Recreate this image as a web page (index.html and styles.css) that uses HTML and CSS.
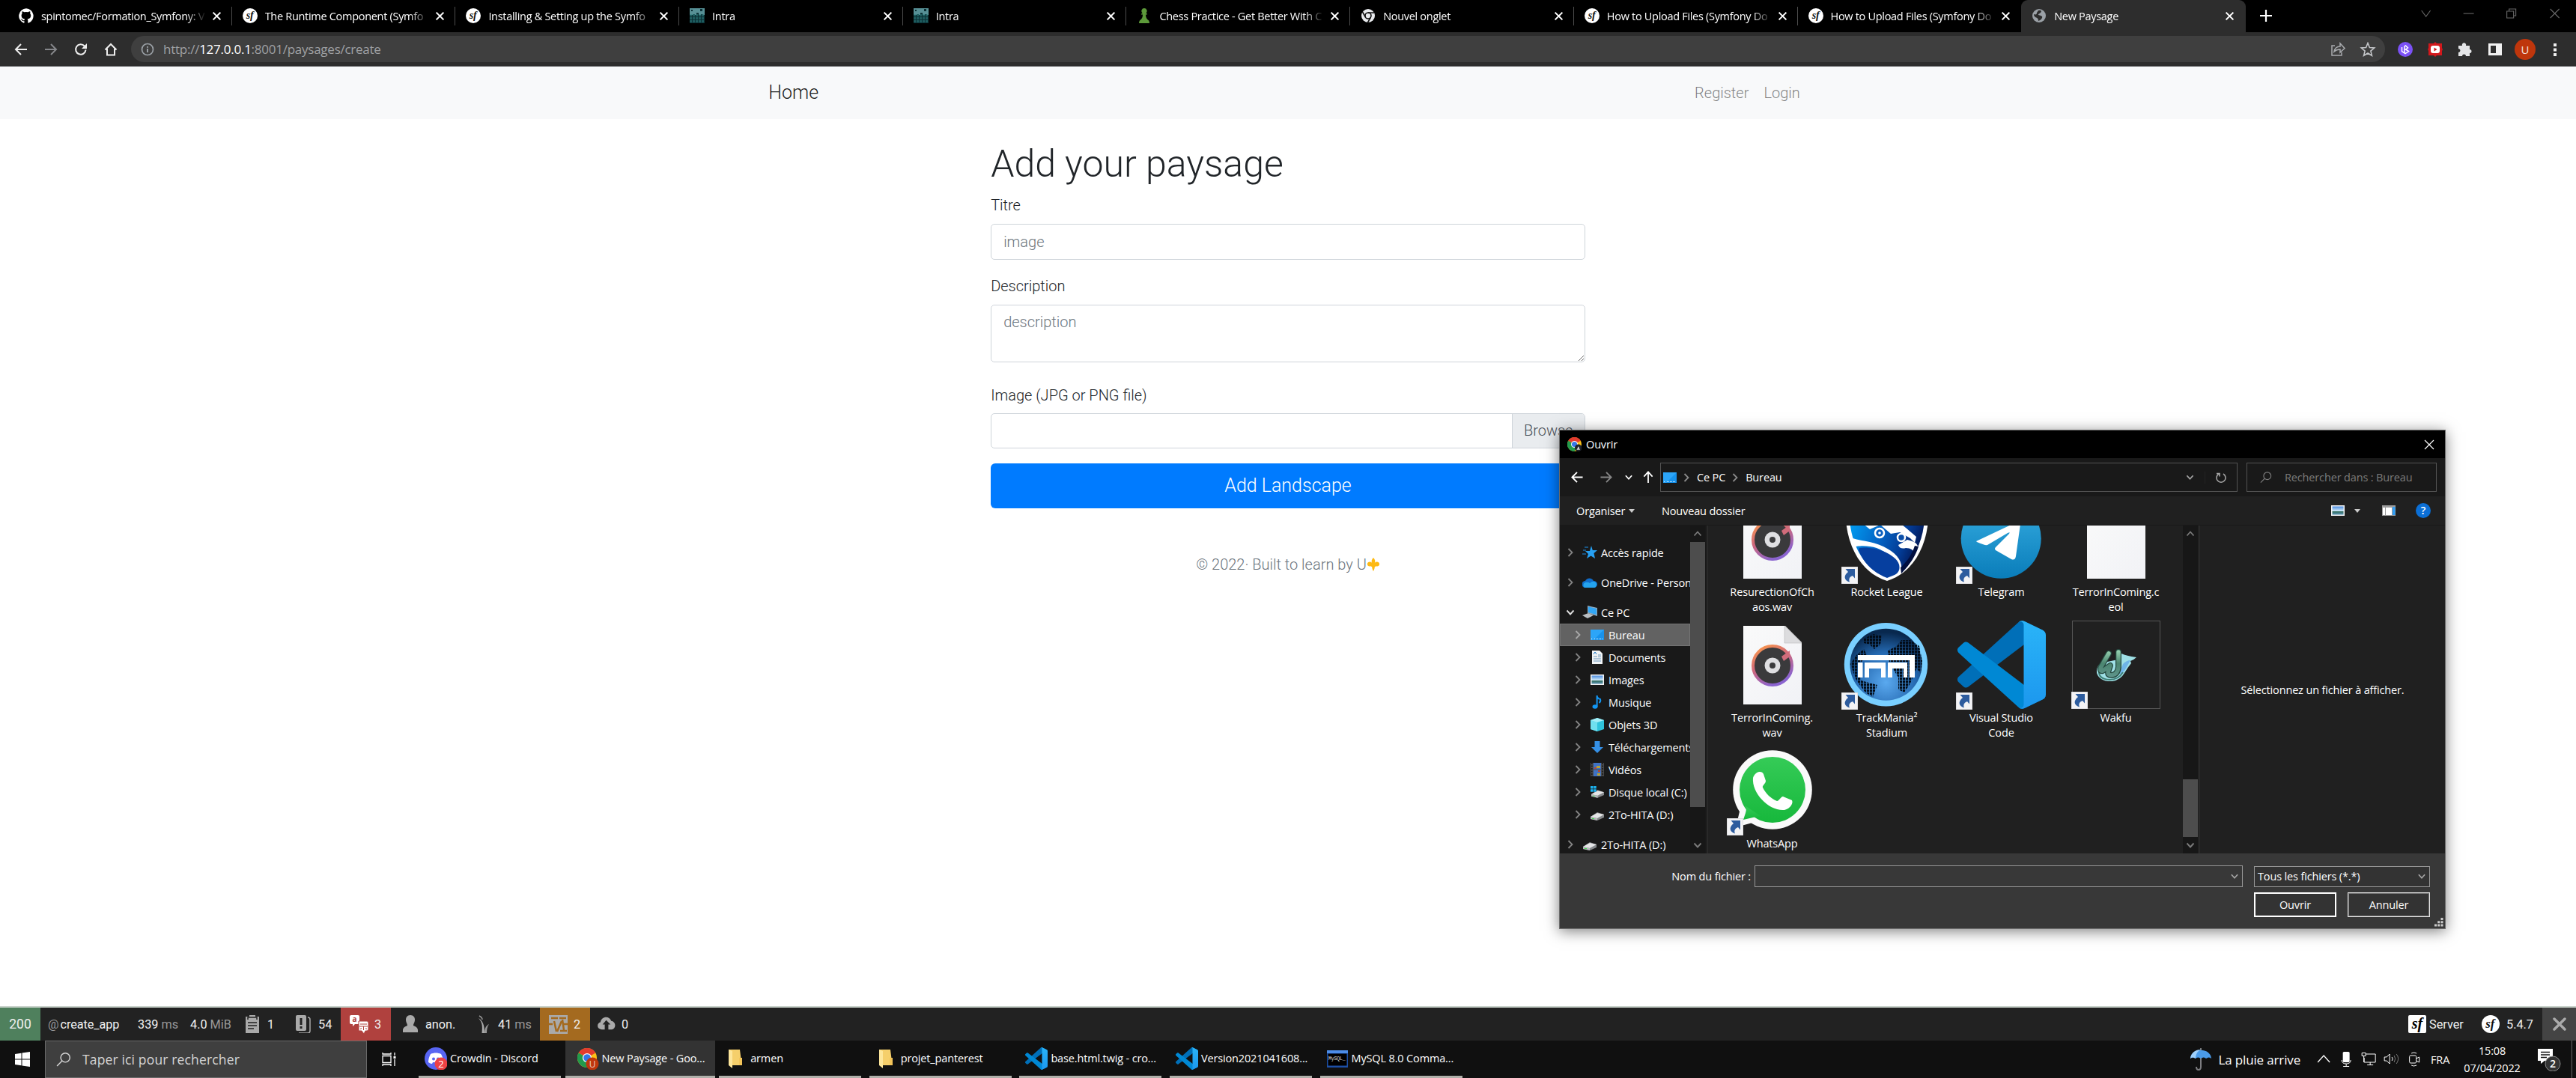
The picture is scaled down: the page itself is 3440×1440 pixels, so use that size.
FILE: index.html
```html
<!DOCTYPE html>
<html lang="fr">
<head>
<meta charset="utf-8">
<title>New Paysage</title>
<link rel="stylesheet" href="styles.css">
</head>
<body>
<svg class="defs" width="0" height="0">
  <defs>
    <linearGradient id="disc" x1="0" y1="0" x2=".5" y2="1"><stop offset="0" stop-color="#ff9d45"/><stop offset=".5" stop-color="#d0687a"/><stop offset="1" stop-color="#8a63cf"/></linearGradient>
    <linearGradient id="paper" x1="0" y1="0" x2="1" y2="1"><stop offset="0" stop-color="#fafafa"/><stop offset="1" stop-color="#f1f2f6"/></linearGradient>
    <linearGradient id="vsr" x1="0" y1="0" x2="0" y2="1"><stop offset="0" stop-color="#2ab4f8"/><stop offset="1" stop-color="#1c97ee"/></linearGradient>
    <linearGradient id="tg" x1="0" y1="0" x2="0" y2="1"><stop offset="0" stop-color="#37aee2"/><stop offset="1" stop-color="#0a7dba"/></linearGradient>
    <linearGradient id="rl" x1="0" y1=".2" x2="1" y2=".6"><stop offset="0" stop-color="#00a2f5"/><stop offset=".45" stop-color="#0463c4"/><stop offset=".75" stop-color="#033a93"/><stop offset="1" stop-color="#020f45"/></linearGradient>
    <radialGradient id="tm" cx=".5" cy=".75" r=".7"><stop offset="0" stop-color="#5aa9ef"/><stop offset=".6" stop-color="#2468b0"/><stop offset="1" stop-color="#08284e"/></radialGradient>
    <linearGradient id="wa" x1="0" y1="0" x2="0" y2="1"><stop offset="0" stop-color="#35cb57"/><stop offset="1" stop-color="#17b83c"/></linearGradient>
    <linearGradient id="wk" gradientUnits="userSpaceOnUse" x1="50" y1="38" x2="50" y2="76"><stop offset="0" stop-color="#9fdcb8"/><stop offset=".5" stop-color="#4c8570"/><stop offset="1" stop-color="#5f958c"/></linearGradient>
    <linearGradient id="sky" x1="0" y1="0" x2="0" y2="1"><stop offset="0" stop-color="#4a8be0"/><stop offset=".55" stop-color="#d3ecfb"/><stop offset=".6" stop-color="#2f6a58"/><stop offset="1" stop-color="#5e97b8"/></linearGradient>
    <pattern id="dots" width="4" height="4" patternUnits="userSpaceOnUse"><rect width="3.2" height="3.2" fill="#020c18"/></pattern>
    <pattern id="grid" width="4" height="4" patternUnits="userSpaceOnUse"><rect width="3" height="3" fill="#2d7f80"/></pattern>
    <symbol id="x" viewBox="0 0 12 12"><path d="M1.5 1.5l9 9m0-9l-9 9" stroke="currentColor" stroke-width="1.9" fill="none"/></symbol>
    <symbol id="thinx" viewBox="0 0 14 14"><path d="M1 1l12 12m0-12L1 13" stroke="currentColor" stroke-width="1.2" fill="none"/></symbol>
    <symbol id="down" viewBox="0 0 12 12"><path d="M1.5 3.5L6 8.500l4.500-5" stroke="currentColor" stroke-width="1.900" fill="none"/></symbol>
    <symbol id="up" viewBox="0 0 12 12"><path d="M1.500 8.500L6 3.500l4.500 5" stroke="currentColor" stroke-width="1.800" fill="none"/></symbol>
    <symbol id="right" viewBox="0 0 12 12"><path d="M3.500 1L8.500 6l-5 5" stroke="currentColor" stroke-width="1.800" fill="none"/></symbol>
    <symbol id="arrow" viewBox="0 0 18 18"><path d="M17 9H2.500M9 2L2 9l7 7" stroke="currentColor" stroke-width="2" fill="none"/></symbol>
    <symbol id="lens" viewBox="0 0 18 18"><circle cx="11" cy="7" r="5.500" stroke="currentColor" stroke-width="1.300" fill="none"/><path d="M7 11L1 17" stroke="currentColor" stroke-width="1.300"/></symbol>
    <symbol id="sf" viewBox="0 0 20 20"><circle cx="10" cy="10" r="10" fill="#fff"/><text x="9.500" y="14" text-anchor="middle" font-family="Liberation Serif, serif" font-style="italic" font-weight="700" font-size="14" fill="#111">sf</text></symbol>
    <symbol id="intra" viewBox="0 0 20 20"><rect width="20" height="20" fill="#0b3136"/><rect width="20" height="9" fill="#579096"/><path d="M2 2h2v2H2zM14 1h3v3h-3zM4 8h3v3H4zM9 6h3v6H9zM15 8h3v3h-3z" fill="#0b3136"/><rect y="8" width="20" height="12" fill="url(#grid)" opacity=".55"/></symbol>
    <symbol id="chrome" viewBox="0 0 20 20"><circle cx="10" cy="10" r="10" fill="#fbc116"/><path d="M10 10L1.300 5A10 10 0 0 1 18.700 5z" fill="#e33b2e"/><path d="M1.300 5A10 10 0 0 0 10 20l4.300-7.500L10 10z" fill="#229a4c"/><circle cx="10" cy="10" r="4.700" fill="#fff"/><circle cx="10" cy="10" r="3.700" fill="#3576e8"/></symbol>
    <symbol id="vscode" viewBox="0 0 100 100"><path d="M96.500 10.800L75.900.9C73.500-.3 70.700.2 68.800 2.100L1.300 63.600c-1.800 1.700-1.800 4.600 0 6.200l5.500 5c1.500 1.400 3.800 1.500 5.400.3l81.300-61.700C96.200 11.300 100 13.300 100 16.700v-.3c0-2.400-1.400-4.600-3.500-5.600z" fill="#006fb8"/><path d="M96.500 89.200l-20.600 9.900c-2.400 1.200-5.200.7-7.100-1.200L1.300 36.400c-1.800-1.700-1.800-4.600 0-6.200l5.500-5c1.500-1.400 3.800-1.500 5.400-.3l81.300 61.700c2.700 2.100 6.500.1 6.500-3.300v.3c0 2.400-1.400 4.600-3.500 5.600z" fill="#0088d4"/><path d="M75.900 99.100c-2.400 1.200-5.200.7-7.100-1.200 2.300 2.300 6.200.7 6.200-2.600V4.700c0-3.300-3.900-4.900-6.200-2.600 1.900-1.900 4.700-2.400 7.100-1.200l20.600 9.900c2.100 1 3.500 3.200 3.500 5.600v67.200c0 2.400-1.400 4.600-3.500 5.600z" fill="url(#vsr)"/></symbol>
    <symbol id="folder" viewBox="0 0 18 26"><path d="M0 1h15l1.500 12v9H0z" fill="#f5cf6b"/><path d="M0 1l5 2v23l-5-4z" fill="#fde69b"/><path d="M14 12h4v10h-4z" fill="#f3c55a"/></symbol>
    <symbol id="cut" viewBox="0 0 22 23"><rect width="22" height="23" fill="#f3f3f5" stroke="#c9c9cc" stroke-width="1"/><path d="M5.500 3H18v12.500l-3-3.500C10.500 13.500 9.500 17 11 20.500 4 18.500 2 12.500 9 7z" fill="#2d5c9e"/></symbol>
    <symbol id="desk" viewBox="0 0 18 14"><rect width="18" height="14" fill="#1792ec"/><path d="M0 0h18L4 14H0z" fill="#2ca5f8"/><path d="M1 12.500h1.500M5 12.500h9M15 12.500h2" stroke="#e6f5ff" stroke-width="1" stroke-dasharray="1 1"/></symbol>
    <symbol id="pic" viewBox="0 0 18 14"><rect width="18" height="14" fill="#f4f4f4"/><rect x="1.500" y="1.500" width="15" height="11" fill="url(#sky)"/></symbol>
    <symbol id="drive" viewBox="0 0 18 11"><path d="M0 6l9-6 9 3v4l-9 4-9-2z" fill="#85888b"/><path d="M0 6l9-5 9 2-9 5z" fill="#e4e5e6"/><path d="M0 6l9 2v3l-9-2z" fill="#b5b8ba"/><rect x="2" y="8" width="3" height="1" fill="#3fe04f"/></symbol>
    <symbol id="music" viewBox="0 0 78 105"><path d="M0 0h56l22 22v83H0z" fill="url(#paper)"/><path d="M55 0l23 23H55z" fill="#dcdcde" stroke="#bbb" stroke-width=".6"/><circle cx="39" cy="53" r="26" fill="#3a3a3c" stroke="url(#disc)" stroke-width="4"/><path d="M51 41l11-8v8l-8 6z" fill="#d16c7b"/><circle cx="39" cy="53" r="10.500" fill="#dfdfe2"/><circle cx="39" cy="53" r="4" fill="#3b3b3d"/></symbol>
  </defs>
</svg>

<div class="screen">
  <header class="tabs">
    <div class="tab"><svg class="fav" viewBox="0 0 20 20"><path fill="#fff" d="M10 .3a10 10 0 0 0-3.200 19.400c.5.1.7-.2.7-.5v-2c-2.800.6-3.400-1.100-3.400-1.100-.5-1.200-1.100-1.500-1.100-1.500-.9-.6.1-.6.1-.6 1 .1 1.500 1 1.500 1 .9 1.600 2.400 1.100 2.900.9.100-.7.400-1.100.7-1.400-2.200-.2-4.600-1.100-4.600-4.900 0-1.100.4-2 1-2.700-.1-.2-.4-1.300.1-2.600 0 0 .8-.3 2.700 1a9.600 9.600 0 0 1 5 0c1.900-1.300 2.700-1 2.700-1 .5 1.400.2 2.400.1 2.600.6.7 1 1.600 1 2.700 0 3.800-2.300 4.700-4.600 4.900.4.300.7.900.7 1.900v2.800c0 .3.200.6.700.5A10 10 0 0 0 10 .3"/></svg><span class="name">spintomec/Formation_Symfony: V</span><svg class="cx"><use href="#x"/></svg></div>
    <div class="tab"><svg class="fav"><use href="#sf"/></svg><span class="name">The Runtime Component (Symfo</span><svg class="cx"><use href="#x"/></svg></div>
    <div class="tab"><svg class="fav"><use href="#sf"/></svg><span class="name">Installing &amp; Setting up the Symfo</span><svg class="cx"><use href="#x"/></svg></div>
    <div class="tab"><svg class="fav"><use href="#intra"/></svg><span class="name">Intra</span><svg class="cx"><use href="#x"/></svg></div>
    <div class="tab"><svg class="fav"><use href="#intra"/></svg><span class="name">Intra</span><svg class="cx"><use href="#x"/></svg></div>
    <div class="tab"><svg class="fav" viewBox="0 0 20 20"><path fill="#5d9a3a" d="M10 0a3.600 3.600 0 0 1 2.300 6.400l1.700 1v1.100h-2c0 4 1.300 5.700 3.600 7.500.9 1 1.400 2.500 1.400 4H3c0-1.500.5-3 1.400-4C6.700 14.200 8 12.500 8 8.500H6V7.400l1.700-1A3.600 3.600 0 0 1 10 0z"/></svg><span class="name">Chess Practice - Get Better With C</span><svg class="cx"><use href="#x"/></svg></div>
    <div class="tab"><svg class="fav" viewBox="0 0 20 20"><circle cx="10" cy="10" r="9" fill="#e8eaed"/><circle cx="10" cy="10" r="4" fill="none" stroke="#111" stroke-width="1.600"/><path d="M10 6h8M6.500 12L2.500 5M13.500 12l-4 7" stroke="#111" stroke-width="1.600"/></svg><span class="name">Nouvel onglet</span><svg class="cx"><use href="#x"/></svg></div>
    <div class="tab"><svg class="fav"><use href="#sf"/></svg><span class="name">How to Upload Files (Symfony Do</span><svg class="cx"><use href="#x"/></svg></div>
    <div class="tab last"><svg class="fav"><use href="#sf"/></svg><span class="name">How to Upload Files (Symfony Do</span><svg class="cx"><use href="#x"/></svg></div>
    <div class="tab active"><svg class="fav" viewBox="0 0 20 20"><circle cx="10" cy="10" r="9" fill="#9aa0a6"/><path d="M9 3c4-1 5 1 3 3L9 8c-1 2 4 1 5 3s-2 5-5 6c0-3-1-4-4-5-2-2-2-3-2-4 3 1 4 0 4-2z" fill="#2d2d2d"/></svg><span class="name">New Paysage</span><svg class="cx"><use href="#x"/></svg></div>
    <svg class="plus" viewBox="0 0 16 16"><path d="M8 0v16M0 8h16" stroke="#fff" stroke-width="2.200"/></svg>
    <div class="winctl">
      <svg viewBox="0 0 14 14"><path d="M1 3l6 8 6-8" /></svg>
      <svg viewBox="0 0 14 14"><path d="M0 7h14"/></svg>
      <svg viewBox="0 0 14 14"><path d="M1 4h9v9H1zM4 4V1h9v9h-3"/></svg>
      <svg viewBox="0 0 14 14"><path d="M1 1l12 12m0-12L1 13"/></svg>
    </div>
  </header>

  <div class="toolbar">
    <div class="cells">
      <svg viewBox="0 0 18 18"><use href="#arrow"/></svg>
      <svg viewBox="0 0 18 18" class="dim flip"><use href="#arrow"/></svg>
      <svg viewBox="0 0 18 18"><path d="M15.500 9.500A6.700 6.700 0 1 1 13.800 4.500" stroke="currentColor" stroke-width="2.100" fill="none"/><path d="M17 1v7h-7z" fill="currentColor"/></svg>
      <svg viewBox="0 0 18 18"><path d="M1.500 9.500L9 2l7.500 7.500M4 8v8.500h10V8" stroke="currentColor" stroke-width="2" fill="none"/></svg>
    </div>
    <div class="omni">
      <svg class="info" viewBox="0 0 18 18"><circle cx="9" cy="9" r="7.500" fill="none" stroke="#9aa0a6" stroke-width="1.700"/><path d="M9 8v5M9 5v1.800" stroke="#9aa0a6" stroke-width="2"/></svg>
      <span class="url">http://<b>127.0.0.1</b>:8001/paysages/create</span>
      <svg viewBox="0 0 20 20"><path d="M6 5H2v13h13v-4M5 13c1-5 4-7 8-7V2l6 6.500-6 5.500V10c-4 0-6 1-8 3z" fill="none" stroke="#a9abae" stroke-width="1.500"/></svg>
      <svg viewBox="0 0 20 20"><path d="M10 1.500l2.400 6 6.300.5-4.800 4.100 1.500 6.200L10 15l-5.400 3.300 1.500-6.200L1.300 8l6.300-.5z" fill="none" stroke="#c4c6c9" stroke-width="1.600"/></svg>
    </div>
    <div class="cells exts">
      <svg viewBox="0 0 20 20"><circle cx="10" cy="10" r="10" fill="#7b51f6"/><path d="M5.500 7v5.500l4.500 3 4.500-3-4-2.500 3-2-3-3-1.500 1v8" stroke="#fff" stroke-width="1.500" fill="none"/></svg>
      <svg viewBox="0 0 20 20"><path d="M1 2h7l2-2 2 2h7v6l1 2-1 2v6h-7l-2 2-2-2H1v-6l-1-2 1-2z" fill="#d2181c"/><rect x="4" y="5" width="12" height="10" rx="3" fill="#fff"/><path d="M8.500 7.500v5l4-2.500z" fill="#d2181c"/></svg>
      <svg viewBox="0 0 20 20"><path d="M1 5h5a2.700 2.700 0 1 1 5 0h5v5a2.500 2.500 0 1 1 0 5v4h-5a2.500 2.500 0 0 0-5 0H1v-5a2.500 2.500 0 0 0 0-5z" fill="#e3e4e6"/></svg>
      <svg viewBox="0 0 20 20"><path d="M1 2h18v16H1zM4 5v10h7V5z" fill="#f1f1f1" fill-rule="evenodd"/></svg>
      <span class="avatar">U</span>
      <svg viewBox="0 0 20 20"><path d="M8 2h4v4H8zM8 8.500h4v4H8zM8 15h4v4H8z" fill="#eee"/></svg>
    </div>
  </div>

  <main class="page">
    <nav class="navbar">
      <div class="container"><a class="brand">Home</a><a class="link">Register</a><a class="link">Login</a></div>
    </nav>
    <form class="form">
      <h1>Add your paysage</h1>
      <label>Titre</label>
      <input class="control" placeholder="image">
      <label>Description</label>
      <textarea class="control area" placeholder="description"></textarea>
      <label>Image (JPG or PNG file)</label>
      <div class="file"><span></span><em>Browse</em></div>
      <button type="button">Add Landscape</button>
    </form>
    <footer class="copy">© 2022· Built to learn by U<svg viewBox="0 0 18 20"><path d="M9 0c2 2.500 3.500 4.500 2 7.500 2.500-2.500 7-1.500 7 2 0 3-3 4-5 3l-2 1c0 2.500-1 4.500-2 6.500-1-2-2-4-2-6.500l-2-1c-2 1-5 0-5-3 0-3.500 4.500-4.500 7-2C5.500 4.500 7 2.500 9 0z" fill="#fdb913"/></svg></footer>
  </main>

  <div class="sfbar">
    <span class="code">200</span>
    <span class="it" style="width:120px"><i>@</i><span class="app">create_app</span></span>
    <span class="it" style="width:70px">339&nbsp;<i>ms</i></span>
    <span class="it" style="width:71px">4.0&nbsp;<i>MiB</i></span>
    <span class="it" style="width:68px"><svg viewBox="0 0 22 24"><path d="M2 2h5V0h8v2h5v22H2z" fill="#aaa"/><path d="M5 6v-3h12v3M5 10h12M5 14h12M5 18h8" stroke="#222" stroke-width="1.500" fill="none"/></svg>1</span>
    <span class="it" style="width:72px"><svg viewBox="0 0 22 24"><rect x="1" y="0" width="14" height="21" rx="2" fill="#aaa"/><path d="M17 3c2 0 3 1 3 3v15c0 2-1 3-3 3H5" stroke="#aaa" stroke-width="1.500" fill="none"/><path d="M8 4v9M8 15v3" stroke="#222" stroke-width="3"/></svg>54</span>
    <span class="it red" style="width:67px"><svg viewBox="0 0 25 25"><path d="M2 0h9q2 0 2 2v8q0 2-2 2H7l-3 3v-3H2q-2 0-2-2V2q0-2 2-2z" fill="#fff"/><path d="M12 8h11q2 0 2 2v9q0 2-2 2h-2l-2 4-3-4h-4z" fill="#fff" stroke="#b0413e"/><text x="3.500" y="9" font-size="10" font-weight="700" font-family="Open Sans, sans-serif" fill="#b0413e">a</text><path d="M14 12h9M13 15h11M18.500 15v5M15.500 17l-1 2M21.500 17l1 2" stroke="#b0413e"/></svg>3</span>
    <span class="it" style="width:101px;padding-left:14px"><svg viewBox="0 0 22 24"><path d="M11 0c4 0 6 3 6 6 0 4-2 5-2 8 3 1 6 3 6 6v3H1v-3c0-3 3-5 6-6 0-3-2-4-2-8 0-3 2-6 6-6z" fill="#aaa"/></svg>anon.</span>
    <span class="it" style="width:98px"><svg viewBox="0 0 22 24"><path d="M9.500 24c1-10 .5-14-4.500-20 6 4 8 9 8 20z" fill="#aaa"/><path d="M13 24c0-6 2-10 6-12-2 3-3 6-3 12z" fill="#999"/><path d="M6 1c2 1 4 3 4 5" stroke="#999" stroke-width="1.500" fill="none"/></svg>41&nbsp;<i>ms</i></span>
    <span class="it amber" style="width:67px"><svg viewBox="0 0 25 25"><rect width="25" height="25" fill="#aaa"/><path d="M3 4h9M14 4h9M7 8l3 14M17 8l-6 14M18 6l2 14M15 21h9M0 12h5M20 12h5" stroke="#a46a1f" stroke-width="2.500"/></svg>2</span>
    <span class="it" style="width:60px"><svg viewBox="0 0 25 25"><path d="M6 20c-8-1-7-9-2-10 1-8 12-10 15-2 7 1 7 11 1 12h-5v-7h3l-6-6-5 6h3v7z" fill="#aaa"/></svg>0</span>
    <span class="grow"></span>
    <span class="it srv"><svg viewBox="0 0 24 24"><rect width="24" height="24" rx="2" fill="#fff"/><text x="12" y="18" text-anchor="middle" font-family="Liberation Serif, serif" font-style="italic" font-weight="700" font-size="20">sf</text></svg>Server</span>
    <span class="it ver"><svg><use href="#sf"/></svg>5.4.7</span>
    <span class="close"><svg viewBox="0 0 18 18"><path d="M2 2l14 14m0-14L2 16" stroke="#aaa" stroke-width="3.500" stroke-linecap="round"/></svg></span>
  </div>

  <div class="taskbar">
    <span class="start"><svg viewBox="0 0 20 20"><path d="M0 3l8.500-1.200v7.700H0zM9.500 1.600L20 0v9.500H9.500zM0 10.500h8.500v7.700L0 17zM9.500 10.500H20V20L9.500 18.400z" fill="#fff"/></svg></span>
    <span class="search"><svg><use href="#lens"/></svg>Taper ici pour rechercher</span>
    <span class="view"><svg viewBox="0 0 20 18"><path d="M1 0v2h11V0M1 18v-2h11v2M1 4.500h11v9H1zM17 0v4M17 9v9" stroke="#fff" stroke-width="1.300" fill="none"/><rect x="15.500" y="5" width="3" height="3" fill="#fff"/></svg></span>
    <span class="task"><svg class="big" viewBox="0 0 30 30"><circle cx="15" cy="15" r="15" fill="#5865f2"/><path d="M8 9c4-2 10-2 14 0 2 4 3 7 3 11-2 1-3 2-5 2l-1-2h-8l-1 2c-2 0-3-1-5-2 0-4 1-7 3-11z" fill="#fff"/><circle cx="12" cy="15.500" r="2" fill="#5865f2"/><circle cx="18" cy="15.500" r="2" fill="#5865f2"/><circle cx="22" cy="22" r="8.500" fill="#ed4245"/><text x="22" y="26.500" text-anchor="middle" font-size="13" fill="#fff" font-family="Open Sans, sans-serif">2</text></svg>Crowdin - Discord</span>
    <span class="task on"><svg class="big" viewBox="0 0 30 30"><svg width="26" height="26" x="1" y="1"><use href="#chrome"/></svg><circle cx="21" cy="22" r="8.500" fill="#bf360c"/><text x="21" y="26.500" text-anchor="middle" font-size="12" fill="#e8c9bf" font-family="Open Sans, sans-serif">U</text></svg>New Paysage - Goo...</span>
    <span class="task f"><svg class="fold"><use href="#folder"/></svg>armen</span>
    <span class="task f"><svg class="fold"><use href="#folder"/></svg>projet_panterest</span>
    <span class="task"><svg class="big"><use href="#vscode"/></svg>base.html.twig - cro...</span>
    <span class="task"><svg class="big"><use href="#vscode"/></svg>Version2021041608...</span>
    <span class="task"><svg class="big" viewBox="0 0 30 30"><rect x="1" y="4" width="28" height="23" fill="#1d4fa5"/><rect x="1" y="4" width="28" height="4" fill="#4c8ce8"/><rect x="2.500" y="8.500" width="25" height="16" fill="#000"/><text x="3" y="17" font-size="6.500" fill="#ddd" font-family="Liberation Mono, monospace">MySQL_</text></svg>MySQL 8.0 Comma...</span>
    <span class="grow"></span>
    <span class="weather"><svg viewBox="0 0 28 30"><path d="M14 10v15q0 4-3 4t-3-4" stroke="#7d7d80" stroke-width="2" fill="none"/><path d="M14 0v3" stroke="#777" stroke-width="2"/><path d="M0 14C1-1 27-1 28 14q-3-3-7 0-3-3-7 0-4-3-7 0-4-3-7 0z" fill="#4a9be9"/><path d="M7 14c0-6 3-10 7-12-7 0-13 4-14 12q3-3 7 0z" fill="#9fd0fb"/></svg>La pluie arrive</span>
    <span class="tray">
      <svg viewBox="0 0 20 20"><path d="M2 14l8-9 8 9" stroke="#fff" stroke-width="1.300" fill="none"/></svg>
      <svg viewBox="0 0 20 20"><rect x="5.500" y="0" width="9" height="14" rx="1.500" fill="#fff"/><path d="M4 11q0 5 6 5t6-5M10 16v4M6 19.500h8" stroke="#fff" fill="none"/></svg>
      <svg viewBox="0 0 20 20"><path d="M6 3h13v11H4V8M12 14v3M8 17.500h8M1 1.500h5v4H1zM3.500 5.500V14" stroke="#fff" fill="none"/></svg>
      <svg viewBox="0 0 20 20"><path d="M1 7h3l4-4v13l-4-4H1z" stroke="#fff" fill="none"/><path d="M11 7q2 3 0 5" stroke="#fff" fill="none"/><path d="M14 5q3 4 0 9M17 3q5 6 0 13" stroke="#777" fill="none"/></svg>
      <svg viewBox="0 0 20 20"><rect x="3.500" y="5" width="9" height="10" rx="1.500" stroke="#fff" fill="none"/><path d="M12.500 9l4-2v7l-4-2M6 2q3-2 7 0M6 18q3 2 7 0" stroke="#fff" fill="none"/></svg>
    </span>
    <span class="lang">FRA</span>
    <span class="clock"><span>15:08</span><span>07/04/2022</span></span>
    <span class="notif"><svg viewBox="0 0 32 32"><path d="M0 2h20v16H9l-5 4v-4H0z" fill="#fff"/><path d="M4 6.500h12M4 10h12M4 13.500h8" stroke="#111" stroke-width="1.300"/><circle cx="20" cy="22" r="10" fill="#333" stroke="#8a8a8a"/><text x="20" y="27" text-anchor="middle" font-size="14" font-weight="600" fill="#fff" font-family="Open Sans, sans-serif">2</text></svg></span>
  </div>
</div>

<section class="dialog">
  <div class="title"><svg viewBox="0 0 20 20"><use href="#chrome"/><circle cx="15.500" cy="15" r="5" fill="#1f232b"/><path d="M13 17.500h5l-1.700-2.500v-1.500h-1.600V15z" fill="#ddd"/></svg>Ouvrir<svg class="dx"><use href="#thinx"/></svg></div>
  <div class="nav">
    <svg class="ar" style="width:46px"><use href="#arrow"/></svg>
    <svg class="ar flip mute" style="width:32px"><use href="#arrow"/></svg>
    <svg class="sm" style="width:28px"><use href="#down"/></svg>
    <svg class="ar" style="width:24px" viewBox="0 0 18 18"><path d="M9 17V2M3 8l6-6.500L15 8" stroke="#fff" stroke-width="1.900" fill="none"/></svg>
    <div class="addr"><svg class="ic"><use href="#desk"/></svg><svg class="ch"><use href="#right"/></svg><span>Ce PC</span><svg class="ch"><use href="#right"/></svg><span>Bureau</span><span class="grow"></span><svg class="sm lt"><use href="#down"/></svg><svg class="rf" viewBox="0 0 16 16"><path d="M5 3A6 6 0 1 0 11 3M2 2.500h4v4" stroke="#a4a4a4" stroke-width="1.600" fill="none"/></svg></div>
    <div class="find"><svg><use href="#lens"/></svg>Rechercher dans : Bureau</div>
  </div>
  <div class="tools"><span class="org">Organiser</span><b class="tri"></b><span class="new">Nouveau dossier</span><span class="grow"></span><svg class="ic"><use href="#pic"/></svg><b class="tri t2"></b><svg class="ic pane" viewBox="0 0 18 14"><rect width="18" height="14" fill="#9c9c9c"/><rect x="1" y="3" width="3" height="10" fill="#fff"/><rect x="5" y="3" width="8" height="10" fill="#fff"/><rect x="14" y="2" width="3.500" height="11" fill="#2f9df4"/></svg><span class="help">?</span></div>
  <div class="body">
    <div class="side">
      <div class="tree">
        <div class="row top"><svg class="ch"><use href="#right"/></svg><svg class="ic" viewBox="0 0 20 18"><path d="M12 0l1.800 6H20l-4.500 4 1.500 7-5.500-3.500L6 17l2-6-4-4h6z" fill="#27a0f2"/><path d="M3 2h5M1 6h4M0 11h5" stroke="#1b6aa5" stroke-width="1.500"/></svg>Accès rapide</div>
        <div class="row top gap"><svg class="ch"><use href="#right"/></svg><svg class="ic" viewBox="0 0 20 14"><path d="M4 14a4.500 4.500 0 0 1 0-9A6 6 0 0 1 15 5a4.500 4.500 0 0 1 1 9z" fill="#0f6cc9"/><path d="M3 14a4 4 0 0 1 1-7q4-1 6 1 3-3 6-2a4.200 4.200 0 0 1 0 8z" fill="#24a3ee"/></svg>OneDrive - Person</div>
        <div class="row top gap"><svg class="ch lt"><use href="#down"/></svg><svg class="ic" viewBox="0 0 20 18"><path d="M7 0l13 3v11L7 10z" fill="#8ea7ba"/><path d="M8 1.500l11 2.500v8L8 9z" fill="#31a6f5"/><path d="M0 13l8-3 7 3-8 4z" fill="#b9bec2"/></svg>Ce PC</div>
        <div class="row sel"><svg class="ch"><use href="#right"/></svg><svg class="ic"><use href="#desk"/></svg>Bureau</div>
        <div class="row"><svg class="ch"><use href="#right"/></svg><svg class="ic" viewBox="0 0 16 18"><path d="M1 0h10l4 4v14H1z" fill="#f1f4f6"/><path d="M3 8h5M3 11h10M3 14h10M9 6h4M9 8.500h4" stroke="#6d98bd"/><path d="M3 5l2-3 2 3" stroke="#1978c8" fill="none"/></svg>Documents</div>
        <div class="row"><svg class="ch"><use href="#right"/></svg><svg class="ic"><use href="#pic"/></svg>Images</div>
        <div class="row"><svg class="ch"><use href="#right"/></svg><svg class="ic" viewBox="0 0 18 18"><ellipse cx="6" cy="15" rx="3.500" ry="2.700" fill="#1396f3"/><path d="M8.600 15V0q0 4 4.400 5 1 3-1.500 5" stroke="#1396f3" stroke-width="2" fill="none"/></svg>Musique</div>
        <div class="row"><svg class="ch"><use href="#right"/></svg><svg class="ic" viewBox="0 0 18 18"><path d="M9 0l9 3v12l-9 3-9-3V3z" fill="#2fc3dc"/><path d="M0 3l9 3v12l-9-3z" fill="#6fe0ef"/><path d="M0 3l9-3 9 3-9 3z" fill="#a3eef7"/></svg>Objets 3D</div>
        <div class="row"><svg class="ch"><use href="#right"/></svg><svg class="ic" viewBox="0 0 18 18"><path d="M5.500 1h7v8H17l-8 8-8-8h4.500z" fill="#3590e6"/></svg>Téléchargements</div>
        <div class="row"><svg class="ch"><use href="#right"/></svg><svg class="ic" viewBox="0 0 18 18"><rect width="18" height="18" fill="#4a4a4a"/><path d="M1.800 0v18M16.200 0v18" stroke="#161616" stroke-width="1.600" stroke-dasharray="2 1.500"/><rect x="4" width="10" height="8.500" fill="#3f72c4"/><rect x="4" y="9.500" width="10" height="8.500" fill="#3f72c4"/><path d="M8 4h5v3H8zM9 14h4v3H9z" fill="#b8a132"/><path d="M5 6h3v2H5zM10 10h3v2h-3z" fill="#b9452f"/></svg>Vidéos</div>
        <div class="row"><svg class="ch"><use href="#right"/></svg><svg class="ic" viewBox="0 0 18 16"><svg x="1" y="5" width="17" height="11"><use href="#drive"/></svg><path d="M0 0h3.500v3.500H0zM4.200 0h3.500v3.500H4.200zM0 4.200h3.500v3.500H0zM4.200 4.200h3.500v3.500H4.200z" fill="#1cb3f0"/></svg>Disque local (C:)</div>
        <div class="row"><svg class="ch"><use href="#right"/></svg><svg class="ic drv"><use href="#drive"/></svg>2To-HITA (D:)</div>
        <div class="row top gap"><svg class="ch"><use href="#right"/></svg><svg class="ic drv"><use href="#drive"/></svg>2To-HITA (D:)</div>
      </div>
      <div class="bar"><svg><use href="#up"/></svg><i style="height:354px"></i><span class="grow"></span><svg><use href="#down"/></svg></div>
    </div>
    <div class="files">
      <div class="grid">
        <div class="fi"><div class="box"><svg class="doc"><use href="#music"/></svg></div>ResurectionOfCh<br>aos.wav</div>
        <div class="fi"><div class="box"><svg viewBox="0 0 118 118"><path d="M4 10Q59-8 114 10C118 62 96 104 59 115 22 104 0 62 4 10z" fill="#fff"/><path d="M9 15Q59 0 109 15C112 60 92 99 59 110 26 99 6 60 9 15z" fill="url(#rl)"/><path d="M8 56c13 6 30 5 46 13 19 9 28 22 23 36l-12 6C76 88 62 78 45 71 34 67 18 68 14 70z" fill="#fff"/><path d="M22 71c15-3 48 6 53 22 2 8-2 12-6 14q-5 2-10 4C41 104 28 92 21 74z" fill="#063f9f"/><path d="M86 60q12 2 15 10l-4 10q-3-9-13-9-8 2-10-4z" fill="#fff"/><path d="M101 69c-4 13-12 25-23 36l-1-8c9-8 15-17 19-29z" fill="#010f3f"/><path d="M26 38l10 8 14-6 14 12 12-2 14 8 6 6 2-8-14-12-10-8z" fill="#fff"/><circle cx="49" cy="51" r="6" fill="#0a5fbf" stroke="#fff" stroke-width="2.500"/><circle cx="49" cy="51" r="1.800" fill="#fff"/><circle cx="78" cy="57" r="5" fill="#0a4faa" stroke="#fff" stroke-width="2.500"/></svg><svg class="cut"><use href="#cut"/></svg></div>Rocket League</div>
        <div class="fi"><div class="box"><svg viewBox="0 0 118 118"><circle cx="58.200" cy="58.200" r="53.500" fill="url(#tg)"/><path d="M25 62L80 36q5-2 4 3l-6 43q-1 6-6 4L51 74q-2-2 0-4l18-18q2-3-2-1L40 67q-3 1-14-4z" fill="#fff"/></svg><svg class="cut"><use href="#cut"/></svg></div>Telegram</div>
        <div class="fi"><div class="box"><svg class="doc" viewBox="0 0 78 105"><rect width="78" height="105" fill="url(#paper)"/></svg></div>TerrorInComing.c<br>eol</div>
        <div class="fi"><div class="box"><svg class="doc"><use href="#music"/></svg></div>TerrorInComing.<br>wav</div>
        <div class="fi"><div class="box"><svg viewBox="0 0 118 118"><circle cx="57.500" cy="58.700" r="55.700" fill="#79cfff"/><circle cx="57.500" cy="58.700" r="48" fill="url(#tm)"/><path d="M28 24l12-6 12 2-2 12-8 6-6-6-8-2zM72 34l6-8h12l12 8 4 20-2 16-6-6-8 20-8 12-8-4V76l-12-20-2-16zM10 58l8-12 10-8 4 8-8 10v24l22 6-6 16-10-6-12-16z" fill="url(#dots)"/><path d="M20 46h76v30h-7V53H20zM20 56h6.500v20H20zM29 56h28v20h-6V64H35v12h-6zM60 56h26v20h-5V64H66v12h-6z" fill="#fff"/></svg><svg class="cut"><use href="#cut"/></svg></div>TrackMania²<br>Stadium</div>
        <div class="fi"><div class="box"><svg><use href="#vscode"/></svg><svg class="cut"><use href="#cut"/></svg></div>Visual Studio<br>Code</div>
        <div class="fi"><div class="box line"><svg viewBox="0 0 118 118"><path d="M66 44q6 3 20 5-4 4-8 5l1 3q-5 6-9 13-5 9-16 11-17 1-21-11-1-8 5-13l28-6z" fill="#9fe0e6"/><path d="M68 58q5-5 10-5l-5 9q-4 8-10 10z" fill="#6fb4e8"/><path d="M36 67q-1 11 14 12 12 0 18-10" stroke="#3f7f76" stroke-width="2" fill="none"/><path d="M49 44L38 63q-1 5 3 4l10-7-3 9q0 4 5 4 8-1 9-11V42" fill="none" stroke="#24483f" stroke-width="8" stroke-linecap="round" stroke-linejoin="round"/><path d="M49 44L38 63q-1 5 3 4l10-7-3 9q0 4 5 4 8-1 9-11V42" fill="none" stroke="url(#wk)" stroke-width="5.500" stroke-linecap="round" stroke-linejoin="round"/></svg><svg class="cut"><use href="#cut"/></svg></div>Wakfu</div>
        <div class="fi"><div class="box"><svg viewBox="0 0 118 118"><circle cx="59" cy="58" r="52.800" fill="#fafafa"/><path d="M16 74q2 4 0 9l-6 25 26-7z" fill="#fafafa"/><circle cx="59" cy="58" r="44" fill="url(#wa)"/><path d="M22 79q3 4 1 10l-3 9 13-3 10-2z" fill="url(#wa)"/><path d="M33 42c3-9 12-10 14-5l3 9c0 4-5 6-4 9 4 8 11 15 19 18 3 0 5-6 8-6l12 5c2 4-2 11-10 13-20 2-44-22-42-43z" fill="#fff"/></svg><svg class="cut"><use href="#cut"/></svg></div>WhatsApp</div>
      </div>
      <div class="bar"><svg><use href="#up"/></svg><span class="grow"></span><i style="height:77px"></i><svg><use href="#down"/></svg></div>
    </div>
    <div class="preview">Sélectionnez un fichier à afficher.</div>
  </div>
  <div class="foot">
    <div class="line1"><span class="fn">Nom du fichier :</span><div class="field"><svg class="sm lt"><use href="#down"/></svg></div><div class="types">Tous les fichiers (*.*)<svg class="sm lt"><use href="#down"/></svg></div></div>
    <div class="line2"><span class="btn pri">Ouvrir</span><span class="btn">Annuler</span></div>
    <svg class="grip" viewBox="0 0 12 12"><path d="M8.500 0h3v3h-3zM8.500 4.300h3v3h-3zM4.200 4.300h3v3h-3zM8.500 8.600h3v3h-3zM4.200 8.600h3v3h-3zM0 8.600h3v3H0z" fill="#ccc"/></svg>
  </div>
</section>
</body>
</html>
```
FILE: styles.css
```css
* { box-sizing: border-box; }
body { margin: 0; width: 3440px; height: 1440px; overflow: hidden; position: relative; background: #fff; font: 14.5px "Open Sans", "Noto Sans", sans-serif; letter-spacing: -.15px; color: #fff; }
svg { flex: none; display: block; }
.defs { position: absolute; }
.grow { flex: 1; }
.flip { transform: scaleX(-1); }
.screen { display: flex; flex-direction: column; height: 1440px; }

/* browser tabs */
.tabs { display: flex; height: 43px; background: #000; padding-left: 11px; flex: none; letter-spacing: -.300px; }
.tab { width: 298.7px; height: 43px; padding: 0 14px 1px 14px; display: flex; align-items: center; gap: 10px; position: relative; }
.tab::after { content: ""; position: absolute; right: 0; top: 9px; height: 25px; width: 1px; background: #4c4c4c; }
.tab.last::after, .tab.active::after { display: none; }
.tab.active { background: #2d2d2d; border-radius: 9px 9px 0 0; width: 300px; padding-right: 15px; }
.fav { width: 20px; height: 20px; }
.name { flex: 1; width: 0; white-space: nowrap; overflow: hidden; margin-right: -7px; -webkit-mask-image: linear-gradient(90deg, #000 86%, transparent 98%); mask-image: linear-gradient(90deg, #000 86%, transparent 98%); }
.cx { width: 13px; height: 13px; }
.plus { width: 16px; height: 16px; margin: 13px 0 0 19px; }
.winctl { display: flex; margin-left: auto; }
.winctl svg { width: 57.300px; height: 14px; margin-top: 11px; fill: none; stroke: #686868; stroke-width: 1.100; }

/* address bar */
.toolbar { display: flex; align-items: center; height: 46px; background: #2d2d2d; border-bottom: 1px solid #5f6063; flex: none; padding-left: 8px; color: #eee; }
.cells { display: flex; align-items: center; }
.cells svg { width: 40px; height: 18px; }
.cells .dim { color: #85868a; }
.omni { width: 3010px; height: 35px; margin-left: 7px; border-radius: 18px; background: #3f3f3f; display: flex; align-items: center; padding-left: 13px; padding-right: 3px; }
.omni svg { width: 40px; height: 20px; }
.omni svg.info { width: 18px; height: 18px; margin-right: 12px; }
.url { flex: 1; font-size: 17px; letter-spacing: -.25px; color: #9fa1a4; }
.url b { font-weight: 400; color: #fff; }
.exts { padding-left: 7px; }
.exts svg { height: 20px; }
.avatar { width: 28px; height: 28px; border-radius: 50%; margin: 0 6px; background: #bf360c; font-size: 15px; display: flex; align-items: center; justify-content: center; color: #f3e2dc; }

/* page */
.page { flex: 1; background: #fff; font-family: Roboto, sans-serif; font-weight: 300; letter-spacing: 0; font-size: 20px; line-height: 30px; color: #212529; }
.navbar { height: 70px; background: #f8f9fa; }
.container { width: 1425px; height: 70px; margin: 0 auto; padding: 0 18.750px; display: flex; align-items: center; }
.brand { font-size: 25px; flex: 1; color: rgba(0,0,0,.9); }
.link { padding: 0 10px; color: rgba(0,0,0,.5); }
.form { width: 793.750px; margin: 30px auto 0; display: flex; flex-direction: column; }
h1 { margin: 0 0 10px; font-size: 50px; line-height: 60px; font-weight: 300; }
label { margin-bottom: 10px; }
.control { font: inherit; height: 47.500px; border: 1px solid #ced4da; border-radius: 5px; padding: 7px 16px; margin: 0 0 20px; background: #fff; }
.control::placeholder { color: #6c757d; opacity: 1; }
.area { height: 77.500px; margin-bottom: 29px; }
.file { display: flex; height: 47px; border: 1px solid #ced4da; border-radius: 5px; overflow: hidden; margin: -1px 0 20px; }
.file span { flex: 1; }
.file em { font-style: normal; width: 97px; padding: 7px 15px; background: #e9ecef; border-left: 1px solid #ced4da; color: #495057; }
.form button { height: 60px; border: 0; border-radius: 6px; background: #007bff; color: #fff; font: inherit; font-size: 25px; }
.copy { display: flex; justify-content: center; margin-top: 60px; color: #6c757d; align-items: center; }
.copy svg { width: 18px; height: 18px; }

/* debug toolbar */
.sfbar { display: flex; height: 46px; flex: none; background: #222; border-top: 2px solid #c9d3cb; font-family: Roboto, sans-serif; font-size: 16.250px; letter-spacing: 0; color: #f0f0f0; }
.code { width: 54px; background: #4f805d; display: flex; align-items: center; justify-content: center; font-size: 17.500px; }
.it { display: flex; align-items: center; padding-left: 10px; white-space: nowrap; }
.it i { font-style: normal; color: #999; }
.it svg { width: 24px; height: 24px; margin-right: 8px; }
.app { letter-spacing: -.100px; margin-left: 2px; }
.red { background: #b0413e; padding-left: 12px; }
.amber { background: #a46a1f; padding-left: 12px; }
.red svg, .amber svg { width: 25px; height: 25px; }
.srv { width: 98px; }
.srv svg { margin-right: 4px; }
.ver { width: 91px; }
.ver svg { margin-right: 9px; }
.close { width: 45px; background: #444; display: flex; align-items: center; justify-content: center; }
.close svg { width: 18px; height: 18px; }

/* taskbar */
.taskbar { display: flex; height: 50px; flex: none; background: #101010; }
.taskbar > span { display: flex; align-items: center; }
.start { width: 60px; padding-left: 20px; }
.start svg { width: 20px; height: 20px; }
.search { width: 430px; background: #3f3f3f; border: 1px solid #6a6a6a; padding-left: 14px; font-size: 17.500px; color: #d6d6d6; letter-spacing: .15px; }
.search svg { width: 20px; height: 20px; margin-right: 15px; }
.view { width: 69px; padding-left: 20px; }
.view svg { width: 20px; height: 18px; }
.task { width: 190px; height: 50px; margin-right: 10.600px; padding-left: 8px; gap: 4px; white-space: nowrap; border-bottom: 3px solid #b0b0aa; }
.task.on { margin-left: -5px; width: 200px; margin-right: 5.600px; background: #333; padding-left: 15px; }
.task.f { padding-left: 13px; gap: 11px; }
.big { width: 30px; height: 30px; }
.fold { width: 18px; height: 26px; }
.weather { font-size: 17px; width: 163px; white-space: nowrap; }
.weather svg { width: 28px; height: 30px; margin-right: 10px; }
.tray svg { width: 30.300px; height: 20px; }
.lang { width: 40px; margin-left: 7px; }
.taskbar .clock { width: 84px; margin-right: 13px; flex-direction: column; justify-content: center; line-height: 23px; }
.notif { width: 52px; padding-left: 6px; border-right: 1px solid #666; margin-right: 5px; }
.notif svg { width: 32px; height: 32px; }

/* open-file window */
.dialog { position: absolute; left: 2082px; top: 574px; width: 1184px; height: 667px; border: 1px solid #6d6d6d; background: #202020; display: flex; flex-direction: column; box-shadow: 0 3px 18px rgba(0,0,0,.5); }
.title { height: 37px; background: #000; display: flex; align-items: center; padding-left: 10px; gap: 6px; flex: none; }
.title svg { width: 19px; height: 19px; }
.title .dx { width: 14px; height: 14px; margin-left: auto; margin-right: 14px; }
.nav { height: 51px; background: #191919; display: flex; align-items: center; flex: none; }
.ar { height: 17px; }
.mute { color: #858585; }
.sm { width: 12px; height: 11px; }
.lt { color: #a4a4a4; }
.addr { margin-left: 4px; width: 771px; height: 39px; border: 1px solid #535353; display: flex; align-items: center; padding-left: 3px; }
.addr .ch { width: 12px; height: 12px; color: #8a8a8a; margin: 0 8px 0 7px; }
.addr .lt { width: 13px; margin-right: 13px; }
.rf { width: 43px; height: 16px; border-left: 1px solid #242424; }
.find { margin-left: 12px; width: 254px; height: 39px; border: 1px solid #535353; display: flex; align-items: center; padding-left: 17px; color: #7b7b7b; }
.find svg { width: 16px; height: 17px; margin-right: 17px; }
.tools { height: 39px; flex: none; display: flex; align-items: center; border-bottom: 1px solid #191919; }
.org { margin-left: 22px; width: 65px; }
.tri { border: 4px solid transparent; border-top: 5px solid #ccc; border-bottom: 0; margin-left: 5px; }
.new { margin-left: 36px; }
.ic { width: 18px; height: 18px; }
.tools .t2 { margin-left: 13px; }
.tools .pane { margin-left: 29px; }
.help { width: 20px; height: 20px; border-radius: 50%; background: #0b6fd6; margin: 0 19px 0 27px; text-align: center; line-height: 20px; font-weight: 600; }
.body { height: 438px; display: flex; flex: none; }
.side { width: 198px; display: flex; background: #191919; border-right: 2px solid #292929; padding-right: 2px; }
.tree { width: 175px; overflow: hidden; padding-top: 21px; }
.row { height: 30px; display: flex; align-items: center; white-space: nowrap; padding-left: 18px; width: 174px; }
.row .ch { width: 12px; height: 12px; color: #858585; margin-right: 11px; }
.row .ic { margin-right: 6px; }
.row.top { padding-left: 8px; }
.row.top .ic { width: 20px; margin-left: -1px; margin-right: 5px; }
.row .drv { height: 11px; margin-top: 4px; }
.row.gap { margin-top: 10px; }
.row .lt { color: #ddd; }
.sel { background: #626262; border: 1px solid #747474; padding-left: 17px; }
.sel .ch { color: #a9a9a9; }
.bar { width: 20px; height: 438px; background: #171717; display: flex; flex-direction: column; align-items: center; }
.bar svg { width: 12px; height: 12px; margin: 5px 0; color: #7a7a7a; }
.bar i { width: 20px; background: #4d4d4d; display: block; }
.files { width: 654px; display: flex; justify-content: space-between; overflow: hidden; }
.grid { display: grid; grid-template-columns: repeat(4, 153px); grid-auto-rows: 168px; margin-left: 9px; margin-top: -41px; height: 520px; }
.fi { text-align: center; line-height: 20px; }
.box { width: 118px; height: 118px; margin: 0 auto 2px; position: relative; display: flex; align-items: center; justify-content: center; }
.box svg { width: 118px; height: 118px; }
.box .doc { width: 78px; height: 105px; }
.box .cut { position: absolute; left: -2px; bottom: -1px; width: 22px; height: 23px; }
.line { border: 1px solid #555; }
.preview { flex: 1; border-left: 2px solid #292929; display: flex; align-items: center; justify-content: center; margin-left: 1px; }
.foot { flex: 1; background: #383838; padding-top: 16px; position: relative; }
.line1 { display: flex; height: 29px; align-items: center; }
.fn { width: 260px; text-align: right; padding-right: 5px; }
.field { width: 652px; height: 29px; border: 1px solid #969696; display: flex; align-items: center; justify-content: flex-end; padding-right: 4px; margin-right: 15px; }
.types { width: 235px; height: 28px; background: #333; border: 1px solid #969696; display: flex; align-items: center; justify-content: space-between; padding: 0 4px; }
.line2 { display: flex; justify-content: flex-end; gap: 15px; padding-right: 20px; margin-top: 7px; }
.btn { width: 110px; height: 33px; border: 1px solid #e4e4e4; outline: 1px solid #777; outline-offset: -2px; background: #333; display: flex; align-items: center; justify-content: center; }
.pri { border: 2px solid #fff; outline: 0; }
.grip { position: absolute; right: 2px; bottom: 2px; width: 12px; height: 12px; }
```
